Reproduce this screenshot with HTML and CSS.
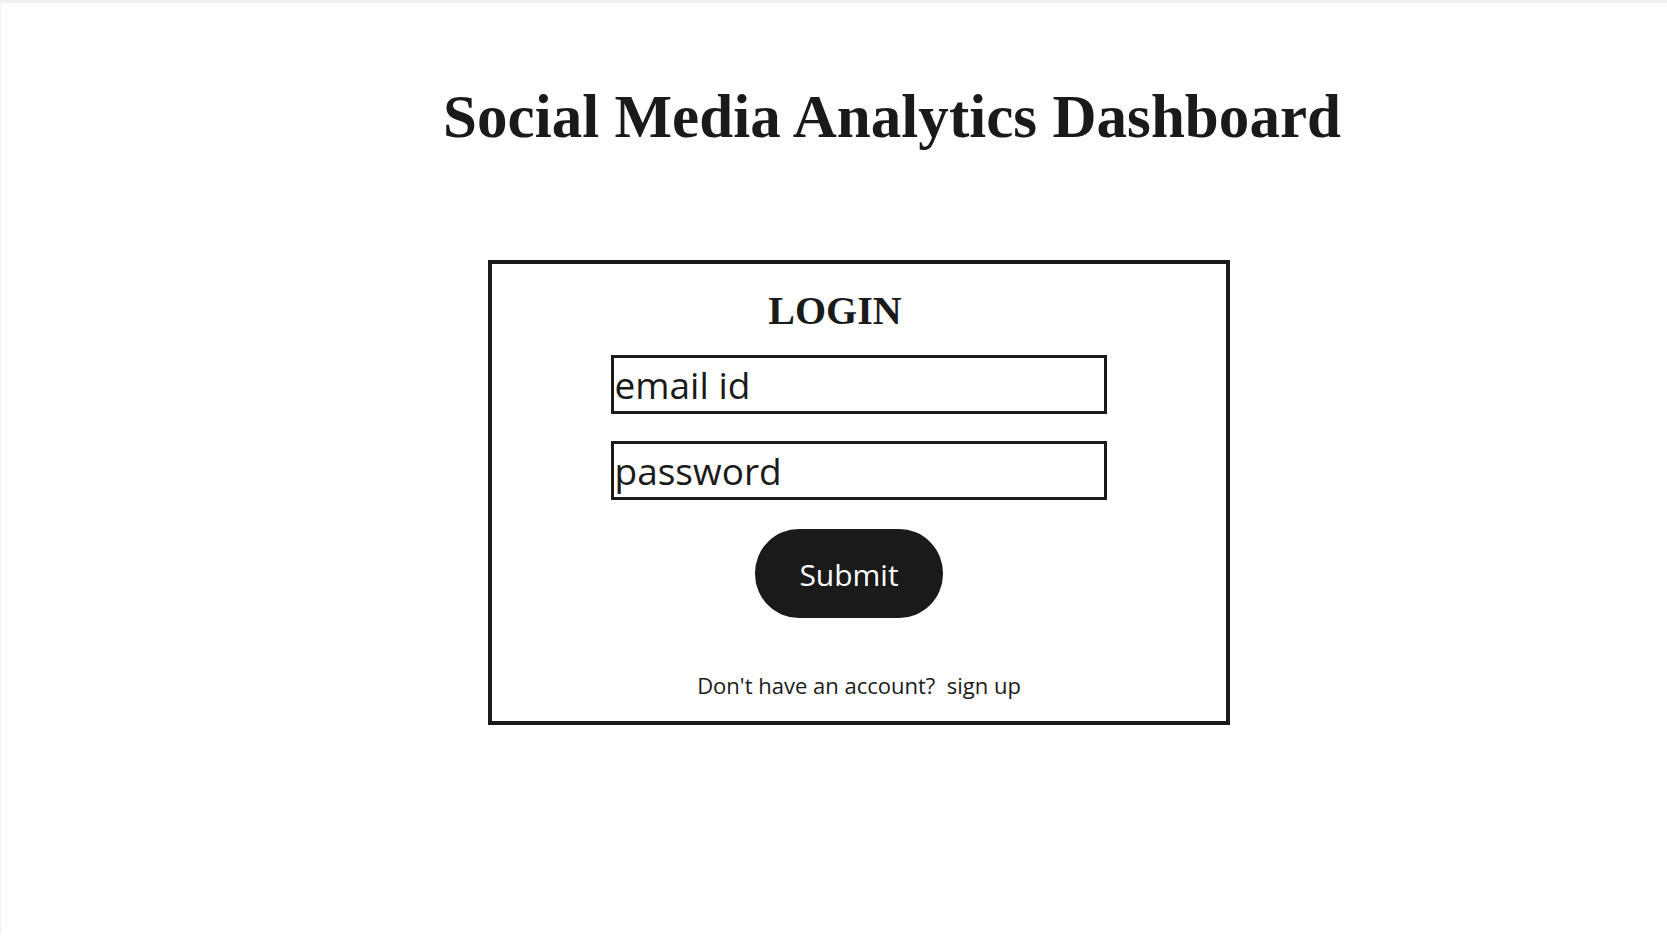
FILE: index.html
```html
<!DOCTYPE html>
<html lang="en">
<head>
<meta charset="utf-8">
<title>Social Media Analytics Dashboard</title>
<link rel="stylesheet" href="styles.css">
</head>
<body>
<div class="page">
  <h1 class="title">Social Media Analytics Dashboard</h1>
  <form class="login-box">
    <h2 class="login-heading">LOGIN</h2>
    <input class="field" type="text" placeholder="email id">
    <input class="field field-password" type="password" placeholder="password">
    <button class="submit" type="button">Submit</button>
    <p class="signup">Don't have an account?&nbsp; <a class="signup-link" href="#">sign up</a></p>
  </form>
</div>
</body>
</html>
```
FILE: styles.css
```css
html, body {
  margin: 0;
  padding: 0;
  background: #ffffff;
}
.page {
  min-height: 934px;
  border-top: 3px solid #f0f0f0;
  border-left: 1px solid #f0f0f0;
  box-sizing: border-box;
  color: #1a1a1a;
  font-family: "Open Sans", sans-serif;
}
.title {
  margin: 79px 0 0 442px;
  font-family: "Liberation Serif", serif;
  font-weight: 700;
  font-size: 61px;
  line-height: 70px;
  letter-spacing: 0.05px;
  color: #1a1a1a;
}
.login-box {
  margin: 108px 0 0 487px;
  width: 742px;
  height: 465px;
  box-sizing: border-box;
  border: 4px solid #1a1a1a;
  padding: 23px 0 0;
  display: flex;
  flex-direction: column;
  align-items: center;
}
.login-heading {
  margin: 0 48px 0 0;
  font-family: "Liberation Serif", serif;
  font-weight: 700;
  font-size: 40px;
  line-height: 48px;
  color: #1a1a1a;
}
.field {
  margin: 20px 0 0 -1px;
  width: 496px;
  height: 59px;
  box-sizing: border-box;
  border: 3px solid #1a1a1a;
  border-radius: 0;
  padding: 0 1px;
  font-family: "Open Sans", sans-serif;
  font-size: 37px;
  color: #1a1a1a;
  background: #ffffff;
  outline: none;
}
.field::placeholder {
  color: #1a1a1a;
  opacity: 1;
}
.field-password {
  margin-top: 27px;
}
.submit {
  margin: 29px 20px 0 0;
  width: 188px;
  height: 89px;
  border: none;
  border-radius: 44px;
  background: #1a1a1a;
  color: #ffffff;
  font-family: "Open Sans", sans-serif;
  font-size: 30px;
  padding: 2px 0 0;
}
.signup {
  margin: 52px 0 0;
  font-size: 22px;
  line-height: 30px;
  color: #1a1a1a;
}
.signup-link {
  color: #1a1a1a;
  text-decoration: none;
}
```
